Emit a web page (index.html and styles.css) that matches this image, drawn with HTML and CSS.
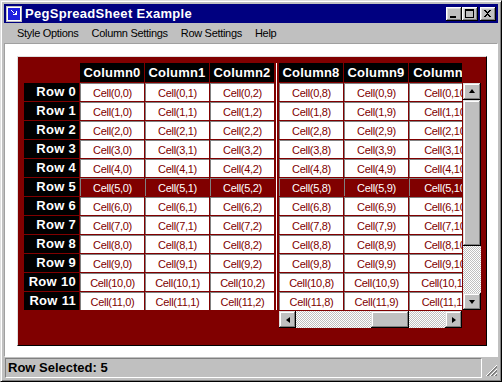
FILE: index.html
```html
<!DOCTYPE html>
<html lang="en">
<head>
  <meta charset="UTF-8">
  <title>PegSpreadSheet Example</title>
  <link rel="stylesheet" href="styles.css">
</head>
<body>
  <div class="window">
    <div class="titlebar">
      <svg class="app-icon" viewBox="0 0 16 16" shape-rendering="crispEdges">
        <rect x="0" y="0" width="16" height="16" fill="#c0c0c0"/>
        <rect x="1" y="1" width="14" height="14" fill="#fff"/>
        <rect x="2" y="2" width="12" height="12" fill="#2020e0"/>
        <path d="M4 4h2v1h1v1h1v1h2v-2h1v4h-4v-1h2v-1h-2v-1h-1v-1h-1v-1h-1z" fill="#fff"/>
      </svg>
      <span class="title">PegSpreadSheet Example</span>
      <div class="caption-buttons">
        <div class="cap-btn">
          <svg viewBox="0 0 16 14" shape-rendering="crispEdges"><rect x="4" y="9" width="6" height="2" fill="#000"/></svg>
        </div>
        <div class="cap-btn">
          <svg viewBox="0 0 16 14" shape-rendering="crispEdges"><path d="M3 2h9v9h-9zM4 4v6h7v-6z" fill="#000" fill-rule="evenodd"/></svg>
        </div>
        <div class="cap-btn close">
          <svg viewBox="0 0 16 14" shape-rendering="crispEdges"><path d="M4 3h2v1h1v1h1v-1h1v-1h2v1h-1v1h-1v1h-1v1h1v1h1v1h1v1h-2v-1h-1v-1h-1v1h-1v1h-2v-1h1v-1h1v-1h1v-1h-1v-1h-1v-1h-1z" fill="#000"/></svg>
        </div>
      </div>
    </div>

    <div class="menubar">
      <span>Style Options</span>
      <span>Column Settings</span>
      <span>Row Settings</span>
      <span>Help</span>
    </div>

    <div class="client">
      <div class="sheet-panel">
        <div class="sheet">
          <div class="col-divider"></div>
          <div class="vscroll">
            <div class="sb-btn"><span class="arrow up"></span></div>
            <div class="sb-thumb v"></div>
            <div class="sb-track"></div>
            <div class="sb-btn"><span class="arrow down"></span></div>
          </div>
          <div class="hscroll">
            <div class="sb-btn"><span class="arrow left"></span></div>
            <div class="sb-track left-track"></div>
            <div class="sb-thumb h"></div>
            <div class="sb-track"></div>
            <div class="sb-btn"><span class="arrow right"></span></div>
          </div>
        </div>
      </div>
    </div>

    <div class="statusbar">
      <div class="status-text">Row Selected: 5</div>
      <svg class="grip" viewBox="0 0 13 13" shape-rendering="crispEdges">
        <path d="M12 1L1 12M12 5L5 12M12 9L9 12" stroke="#fff" stroke-width="1"/>
        <path d="M12 2L2 12M12 3L3 12M12 6L6 12M12 7L7 12M12 10L10 12M12 11L11 12" stroke="#808080" stroke-width="1"/>
      </svg>
    </div>
  </div>

  <script>
    // Build the visible part of the spreadsheet
    const columns = [0, 1, 2, 8, 9, 10];
    const selectedRow = 5;
    const sheet = document.querySelector('.sheet');

    function addDiv(className, text) {
      const el = document.createElement('div');
      el.className = className;
      if (text !== undefined) el.textContent = text;
      sheet.appendChild(el);
      return el;
    }

    // header row
    addDiv('corner');
    columns.forEach(col => {
      const head = addDiv(col === 10 ? 'col-head clip' : 'col-head');
      const label = document.createElement('span');
      label.textContent = 'Column' + col;
      head.appendChild(label);
    });
    addDiv('corner');

    // data rows
    for (let row = 0; row < 12; row++) {
      addDiv('row-head', 'Row ' + row);
      columns.forEach(col => {
        let cls = 'cell';
        if (col === 10) cls += ' clip';
        if (row === selectedRow) cls += ' selected';
        const cell = addDiv(cls);
        const text = document.createElement('span');
        text.textContent = 'Cell(' + row + ',' + col + ')';
        cell.appendChild(text);
      });
    }
  </script>
</body>
</html>
```

FILE: styles.css
```css
/* Win95 style spreadsheet window */
* {
  box-sizing: border-box;
}

body {
  margin: 0;
  background-color: #c0c0c0;
  font-family: "Liberation Sans", Arial, sans-serif;
}

.window {
  width: 502px;
  height: 382px;
  padding: 3px;
  background-color: #c0c0c0;
  border: 1px solid;
  border-color: #dfdfdf #000 #000 #dfdfdf;
  box-shadow: inset 1px 1px #fff, inset -1px -1px #808080;
  display: flex;
  flex-direction: column;
}

/* title bar */
.titlebar {
  height: 19px;
  flex: none;
  background-color: #000080;
  color: #fff;
  display: flex;
  align-items: center;
  padding: 0 2px;
}

.app-icon {
  width: 16px;
  height: 16px;
  margin-right: 3px;
}

.title {
  flex: 1;
  font-size: 13px;
  font-weight: bold;
  letter-spacing: 0.3px;
}

.caption-buttons {
  display: flex;
}

.cap-btn {
  width: 16px;
  height: 14px;
  background-color: #c0c0c0;
  box-shadow: inset -1px -1px #000, inset 1px 1px #fff, inset -2px -2px #808080, inset 2px 2px #dfdfdf;
}

.cap-btn svg {
  display: block;
  width: 16px;
  height: 14px;
}

.cap-btn.close {
  margin-left: 2px;
}

/* menu bar */
.menubar {
  height: 20px;
  flex: none;
  display: flex;
  align-items: center;
  gap: 13px;
  padding-left: 13px;
  font-size: 11px;
  letter-spacing: -0.3px;
  color: #000;
}

/* white client area */
.client {
  height: 314px;
  flex: none;
  background-color: #fff;
  border: 1px solid;
  border-color: #a0a0a0 #fff #fff #a0a0a0;
  padding: 12px 0 0 12px;
}

.sheet-panel {
  width: 470px;
  height: 290px;
  background-color: #800000;
  border: 1px solid;
  border-color: #dfdfdf #000 #000 #dfdfdf;
  padding: 6px 0 0 6px;
}

.sheet {
  display: grid;
  grid-template-columns: 55px 64px 64px 64px 3px 64px 64px 53px 18px;
  grid-template-rows: 19px repeat(12, 18px) 17px;
  gap: 1px;
}

.col-head {
  background-color: #000;
  color: #fff;
  font-size: 13px;
  font-weight: bold;
  letter-spacing: 0.2px;
  display: flex;
  align-items: center;
  justify-content: center;
  overflow: hidden;
}

.row-head {
  background-color: #000;
  color: #fff;
  font-size: 13px;
  font-weight: bold;
  letter-spacing: 0.3px;
  text-align: right;
  padding-right: 3px;
  line-height: 18px;
}

.cell {
  background-color: #fff;
  color: #800000;
  border-top: 1px solid #808080;
  border-left: 1px solid #808080;
  font-size: 11px;
  letter-spacing: -0.3px;
  display: flex;
  align-items: center;
  justify-content: center;
  overflow: hidden;
  white-space: nowrap;
}

.cell.selected {
  background-color: #800000;
  color: #fff;
}

.clip {
  justify-content: flex-start;
}

.clip span {
  flex: none;
  width: 73px;
  text-align: center;
}

.col-divider {
  grid-column: 5;
  grid-row: 1 / span 13;
  background: linear-gradient(to right, #800000 0 1px, #fff 1px 2px, #800000 2px);
}

/* scroll bars */
.vscroll {
  grid-column: 9;
  grid-row: 2 / span 12;
  display: flex;
  flex-direction: column;
}

.hscroll {
  grid-column: 6 / span 3;
  grid-row: 14;
  display: flex;
}

.sb-btn {
  flex: none;
  width: 18px;
  height: 17px;
  background-color: #c0c0c0;
  box-shadow: inset -1px -1px #000, inset 1px 1px #dfdfdf, inset -2px -2px #808080, inset 2px 2px #fff;
  display: flex;
  align-items: center;
  justify-content: center;
}

.hscroll .sb-btn {
  width: 17px;
}

.sb-thumb {
  flex: none;
  background-color: #c0c0c0;
  box-shadow: inset -1px -1px #000, inset 1px 1px #dfdfdf, inset -2px -2px #808080, inset 2px 2px #fff;
}

.sb-thumb.v {
  height: 146px;
}

.sb-thumb.h {
  width: 38px;
}

.sb-track {
  flex: 1;
  background-image: repeating-conic-gradient(#c0c0c0 0 25%, #fff 0 50%);
  background-size: 2px 2px;
}

.left-track {
  flex: none;
  width: 75px;
}

.arrow {
  width: 1px;
  height: 1px;
  border: 0 solid transparent;
}

.arrow.up {
  border-width: 0 3px 4px 3px;
  border-bottom-color: #000;
  margin-top: -1px;
}

.arrow.down {
  border-width: 4px 3px 0 3px;
  border-top-color: #000;
}

.arrow.left {
  border-width: 3px 4px 3px 0;
  border-right-color: #000;
}

.arrow.right {
  border-width: 3px 0 3px 4px;
  border-left-color: #000;
}

/* status bar */
.statusbar {
  height: 20px;
  margin-top: 1px;
  flex: none;
  display: flex;
  align-items: flex-end;
}

.status-text {
  width: 477px;
  height: 20px;
  margin-left: 1px;
  border: 1px solid;
  border-color: #808080 #fff #fff #808080;
  padding-left: 2px;
  font-size: 13px;
  font-weight: bold;
  line-height: 18px;
  color: #000;
}

.grip {
  width: 13px;
  height: 13px;
  margin-left: 3px;
  margin-bottom: 1px;
}
```
